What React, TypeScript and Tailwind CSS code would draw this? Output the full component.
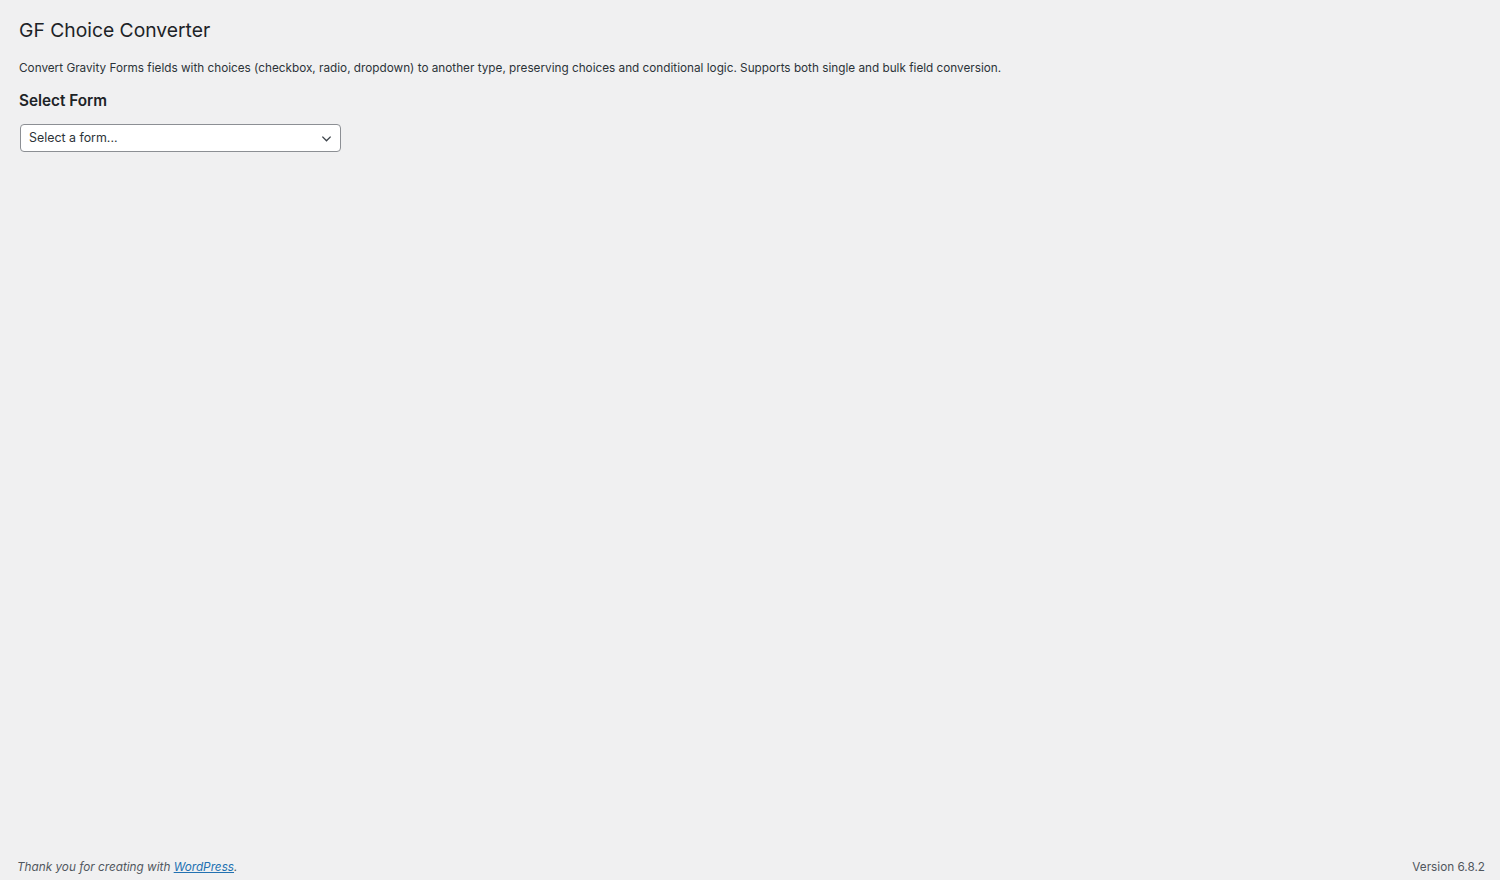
import React from "react";

export default function App() {
  return (
    <div
      className="min-h-[880px] h-[880px] bg-[#f0f0f1] flex flex-col text-[#3c434a] overflow-hidden"
      style={{ fontFamily: 'Inter, "Liberation Sans", sans-serif' }}
    >
      <div className="flex-1 pl-[19px] pr-5">
        <h1 className="text-[19.3px] leading-[29px] font-normal text-[#1d2327] pt-[16px] pb-[4px] m-0">
          GF Choice Converter
        </h1>
        <p className="text-[11.75px] leading-[19px] mt-[10px] text-[#2c3338]">
          Convert Gravity Forms fields with choices (checkbox, radio, dropdown) to another type, preserving choices and conditional logic. Supports both single and bulk field conversion.
        </p>
        <h2 className="text-[15.3px] leading-[22px] font-semibold text-[#1d2327] mt-[12px]">
          Select Form
        </h2>
        <div className="mt-[12px] ml-px w-[321px] h-[28px] bg-white border border-[#8c8f94] rounded-[4px] flex items-center justify-between pl-[8px] pr-[6px] text-[12.4px] text-[#2c3338]">
          <span>Select a form...</span>
          <svg width="15" height="15" viewBox="0 0 20 20" fill="none" stroke="#3c434a" strokeWidth="1.8">
            <path d="M4.5 7.5l5.5 5.5 5.5-5.5" />
          </svg>
        </div>
      </div>
      <div className="flex justify-between items-center pl-[17px] pr-[15px] pt-[4px] text-[11.75px] text-[#50575e] h-[28px]">
        <span className="italic">
          Thank you for creating with{" "}
          <a className="text-[#2271b1] underline">WordPress</a>.
        </span>
        <span>Version 6.8.2</span>
      </div>
    </div>
  );
}
